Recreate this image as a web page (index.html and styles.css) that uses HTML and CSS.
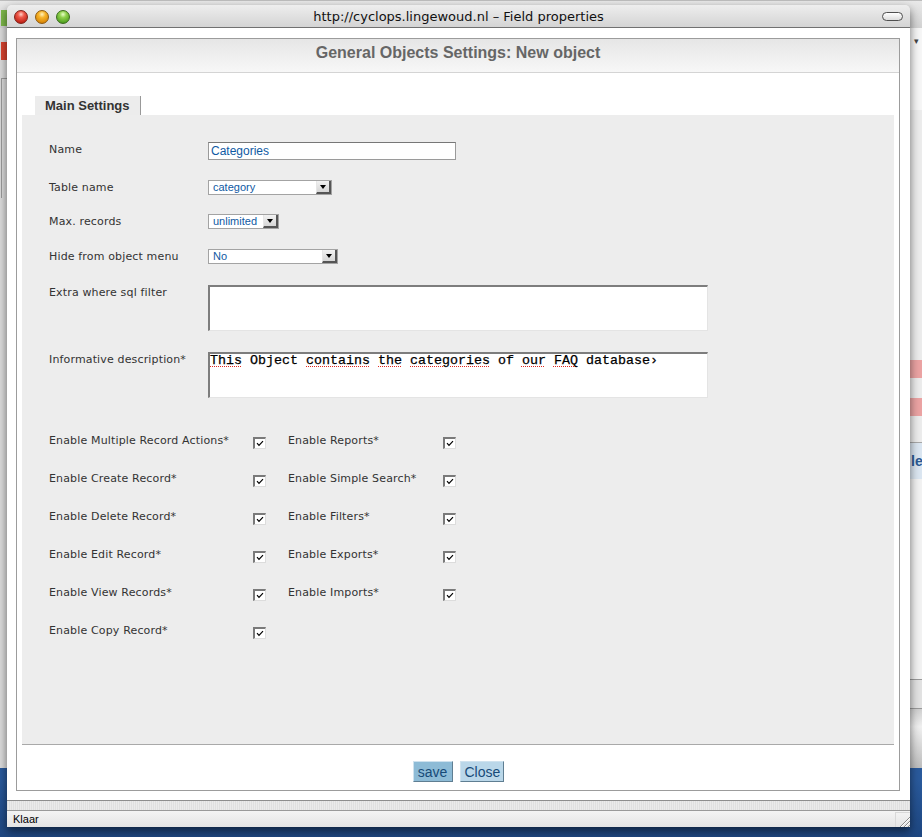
FILE: index.html
```html
<!DOCTYPE html>
<html>
<head>
<meta charset="utf-8">
<title>Field properties</title>
<link rel="stylesheet" href="styles.css">
</head>
<body>
<div class="desktop">
  <div class="backwin">
    <div class="bw-title"></div>
    <div class="bw-body">
      <div class="bw-left">
        <div class="bw-green"></div>
        <div class="bw-red"></div>
        <div class="bw-lines"></div>
      </div>
      <div class="bw-mid"></div>
      <div class="bw-right">
        <div class="bw-r1">&#9662;</div>
        <div class="bw-r2"></div>
        <div class="bw-pink"></div>
        <div class="bw-r3"></div>
        <div class="bw-pink"></div>
        <div class="bw-r4"></div>
        <div class="bw-blue">le</div>
        <div class="bw-r5"></div>
        <div class="bw-r6"></div>
        <div class="bw-r7"></div>
      </div>
    </div>
  </div>

  <div class="win">
    <div class="titlebar">
      <div class="lights">
        <span class="light red"></span>
        <span class="light yellow"></span>
        <span class="light green"></span>
      </div>
      <div class="title">http://cyclops.lingewoud.nl – Field properties</div>
      <span class="pill"></span>
    </div>

    <div class="content">
      <div class="box">
        <div class="header">General Objects Settings: New object</div>
        <div class="tabs"><div class="tab">Main Settings</div></div>
        <div class="panel">
          <div class="frow r1">
            <div class="lbl">Name</div>
            <div class="textinput">Categories</div>
          </div>
          <div class="frow r2">
            <div class="lbl">Table name</div>
            <div class="select w-table"><span class="sel-text">category</span><span class="arrow"></span></div>
          </div>
          <div class="frow r3">
            <div class="lbl">Max. records</div>
            <div class="select w-max"><span class="sel-text">unlimited</span><span class="arrow"></span></div>
          </div>
          <div class="frow r4">
            <div class="lbl">Hide from object menu</div>
            <div class="select w-hide"><span class="sel-text">No</span><span class="arrow"></span></div>
          </div>
          <div class="frow r5">
            <div class="lbl">Extra where sql filter</div>
            <div class="textarea"></div>
          </div>
          <div class="frow r6">
            <div class="lbl">Informative description*</div>
            <div class="textarea"><span class="sp">This</span> Object <span class="sp">contains</span> <span class="sp">the</span> <span class="sp">categories</span> of <span class="sp">our</span> <span class="sp">FAQ</span> database›</div>
          </div>

          <div class="cbgrid">
            <div class="cblbl">Enable Multiple Record Actions*</div>
            <div class="cb"><svg viewBox="0 0 10 9" width="10" height="9"><path d="M2 4.2 L4 6.4 L8 2.2" fill="none" stroke="#000" stroke-width="1.2"/></svg></div>
            <div class="cblbl">Enable Reports*</div>
            <div class="cb"><svg viewBox="0 0 10 9" width="10" height="9"><path d="M2 4.2 L4 6.4 L8 2.2" fill="none" stroke="#000" stroke-width="1.2"/></svg></div>

            <div class="cblbl">Enable Create Record*</div>
            <div class="cb"><svg viewBox="0 0 10 9" width="10" height="9"><path d="M2 4.2 L4 6.4 L8 2.2" fill="none" stroke="#000" stroke-width="1.2"/></svg></div>
            <div class="cblbl">Enable Simple Search*</div>
            <div class="cb"><svg viewBox="0 0 10 9" width="10" height="9"><path d="M2 4.2 L4 6.4 L8 2.2" fill="none" stroke="#000" stroke-width="1.2"/></svg></div>

            <div class="cblbl">Enable Delete Record*</div>
            <div class="cb"><svg viewBox="0 0 10 9" width="10" height="9"><path d="M2 4.2 L4 6.4 L8 2.2" fill="none" stroke="#000" stroke-width="1.2"/></svg></div>
            <div class="cblbl">Enable Filters*</div>
            <div class="cb"><svg viewBox="0 0 10 9" width="10" height="9"><path d="M2 4.2 L4 6.4 L8 2.2" fill="none" stroke="#000" stroke-width="1.2"/></svg></div>

            <div class="cblbl">Enable Edit Record*</div>
            <div class="cb"><svg viewBox="0 0 10 9" width="10" height="9"><path d="M2 4.2 L4 6.4 L8 2.2" fill="none" stroke="#000" stroke-width="1.2"/></svg></div>
            <div class="cblbl">Enable Exports*</div>
            <div class="cb"><svg viewBox="0 0 10 9" width="10" height="9"><path d="M2 4.2 L4 6.4 L8 2.2" fill="none" stroke="#000" stroke-width="1.2"/></svg></div>

            <div class="cblbl">Enable View Records*</div>
            <div class="cb"><svg viewBox="0 0 10 9" width="10" height="9"><path d="M2 4.2 L4 6.4 L8 2.2" fill="none" stroke="#000" stroke-width="1.2"/></svg></div>
            <div class="cblbl">Enable Imports*</div>
            <div class="cb"><svg viewBox="0 0 10 9" width="10" height="9"><path d="M2 4.2 L4 6.4 L8 2.2" fill="none" stroke="#000" stroke-width="1.2"/></svg></div>

            <div class="cblbl">Enable Copy Record*</div>
            <div class="cb"><svg viewBox="0 0 10 9" width="10" height="9"><path d="M2 4.2 L4 6.4 L8 2.2" fill="none" stroke="#000" stroke-width="1.2"/></svg></div>
          </div>
        </div>
        <div class="footer">
          <button class="btn btn-save">save</button>
          <button class="btn btn-close">Close</button>
        </div>
      </div>
    </div>

    <div class="stripes"></div>
    <div class="status">
      <span class="klaar">Klaar</span>
      <span class="grip"><svg viewBox="0 0 15 15" width="15" height="15"><path d="M14 4 L4 14 M14 8 L8 14 M14 12 L12 14" stroke="#8a8a8a" stroke-width="1"/><path d="M14 5 L5 14 M14 9 L9 14" stroke="#fff" stroke-width="1"/></svg></span>
    </div>
  </div>
</div>
</body>
</html>
```

FILE: styles.css
```css
* { box-sizing: border-box; }
html, body { margin: 0; padding: 0; }
body {
  width: 922px;
  height: 837px;
  overflow: hidden;
  background: linear-gradient(#2e62a8 0, #2a5a9c 780px, #1d4680 837px);
  font-family: "Liberation Sans", Arial, sans-serif;
}
.desktop { position: relative; width: 922px; height: 837px; }

/* window behind */
.backwin {
  position: absolute;
  left: -30px;
  top: 0;
  width: 990px;
  height: 768px;
  background: #ececec;
  display: flex;
  flex-direction: column;
}
.bw-title {
  height: 28px;
  background: linear-gradient(#e9e9e9, #d2d2d2);
  border-top: 1px solid #bdbdbd;
}
.bw-body { flex: 1; display: flex; }
.bw-left { width: 37px; display: flex; flex-direction: column; align-items: flex-end; background: #dcdcdc; }
.bw-green { width: 6px; height: 16px; margin-top: -18px; background: #7db84a; }
.bw-red { width: 6px; height: 18px; margin-top: 16px; background: #d8442f; }
.bw-lines { width: 6px; height: 120px; margin-top: 18px; border-left: 1px solid #9a9a9a; border-top: 1px solid #9a9a9a; }
.bw-mid { flex: 1; }
.bw-right { width: 80px; display: flex; flex-direction: column; background: #ececec; }
.bw-r1 { height: 82px; background: #f6f6f6; font-size: 9px; color: #444; padding: 8px 0 0 34px; }
.bw-r2 { height: 250px; background: #ececec; }
.bw-pink { height: 18px; background: #eba3a3; }
.bw-r3 { height: 20px; background: #ececec; }
.bw-r4 { height: 27px; background: #ececec; border-bottom: 1px solid #a8a8a8; }
.bw-blue { height: 36px; background: #dbe6f1; color: #2a5a94; font: bold 14px/36px "Liberation Sans", sans-serif; padding-left: 31px; }
.bw-r5 { height: 201px; background: #f2f2f2; border-bottom: 1px solid #9a9a9a; }
.bw-r6 { height: 29px; background: #e2e2e2; border-bottom: 1px solid #9a9a9a; }
.bw-r7 { flex: 1; background: linear-gradient(#cfcfcf, #f0f0f0 30%, #bdbdbd); }

/* front window */
.win {
  position: absolute;
  left: 7px;
  top: 5px;
  width: 903px;
  height: 822px;
  display: flex;
  flex-direction: column;
  box-shadow: 0 4px 10px rgba(0, 0, 0, 0.55);
  border-radius: 5px 5px 0 0;
}
.titlebar {
  height: 23px;
  border-bottom: 1px solid #717171;
  background: linear-gradient(#eeeeee, #d4d4d4);
  border-radius: 5px 5px 0 0;
  display: grid;
  grid-template-columns: 1fr auto 1fr;
  align-items: center;
  padding: 0 7px;
}
.lights { display: flex; gap: 7px; margin-top: 2px; }
.light { width: 14px; height: 14px; border-radius: 50%; display: block; }
.red {
  background: radial-gradient(circle at 50% 28%, #ffd0c8 0, #ee5a4c 30%, #c4261a 75%, #8e140c 100%);
  border: 1px solid #7e2018;
}
.yellow {
  background: radial-gradient(circle at 50% 28%, #fff2c0 0, #f7b52c 32%, #dc8a0a 75%, #a36206 100%);
  border: 1px solid #8c5a10;
}
.green {
  background: radial-gradient(circle at 50% 28%, #e8ffc8 0, #8fd04c 32%, #56a524 75%, #2f7410 100%);
  border: 1px solid #3a6a1c;
}
.title {
  font: 13px/16px "DejaVu Sans", "Liberation Sans", sans-serif;
  color: #111;
  margin-top: 1px;
}
.pill {
  justify-self: end;
  width: 21px;
  height: 9px;
  margin-top: 1px;
  border: 1px solid #4f4f4f;
  border-radius: 5px;
  background: linear-gradient(#ffffff, #dcdcdc);
}

.content {
  height: 772px;
  background: #fff;
  padding: 10px 10px 9px 9px;
}
.box {
  height: 753px;
  border: 1px solid #9c9c9c;
  display: flex;
  flex-direction: column;
}
.header {
  height: 34px;
  border-bottom: 1px solid #d4d4d4;
  background: linear-gradient(#e6e6e6, #f7f7f7);
  text-align: center;
  font: bold 16px/18px "Liberation Sans", Arial, sans-serif;
  color: #666;
  padding-top: 5px;
}
.tabs { margin-top: 23px; height: 19px; padding-left: 18px; display: flex; }
.tab {
  background: #ececec;
  border-right: 1px solid #999;
  padding: 0 10px;
  font: bold 13px/19px "Liberation Sans", Arial, sans-serif;
  color: #333;
}
.panel {
  height: 630px;
  margin: 0 5px;
  background: #ededed;
  border-bottom: 1px solid #a9a9a9;
  padding: 27px 0 0 27px;
  font: 11px/14px "DejaVu Sans", Verdana, sans-serif;
  letter-spacing: 0.15px;
  color: #333;
}
.frow { display: flex; align-items: flex-start; }
.lbl { width: 159px; flex: none; padding-top: 1px; }
.cblbl { padding-top: 1px; }
.r1 { height: 38px; }
.r2 { height: 34px; }
.r3 { height: 35px; }
.r4 { height: 36px; }
.r5 { height: 67px; }
.r6 { height: 81px; }

.textinput {
  width: 248px;
  height: 18px;
  border: 1px solid #9a9a9a;
  border-top-color: #777;
  background: #fff;
  padding: 1px 2px 0;
  font: 12px/14px "Liberation Sans", Arial, sans-serif;
  letter-spacing: 0;
  color: #0f5aa3;
}
.select {
  height: 15px;
  border: 1px solid #a3a3a3;
  background: #fff;
  display: flex;
  align-items: stretch;
}
.w-table { width: 124px; }
.w-max { width: 71px; }
.w-hide { width: 130px; }
.sel-text {
  flex: 1;
  padding-left: 4px;
  font: 11px/13px "Liberation Sans", Arial, sans-serif;
  letter-spacing: 0;
  color: #0f5aa3;
  white-space: nowrap;
  overflow: hidden;
}
.arrow {
  width: 15px;
  flex: none;
  background: linear-gradient(#f2f2f2, #d6d6d6);
  border-left: 1px solid #e6e6e6;
  border-right: 2px solid #555;
  border-bottom: 2px solid #555;
  display: flex;
  align-items: center;
  justify-content: center;
}
.arrow::after {
  content: "";
  width: 0;
  height: 0;
  border-left: 3.5px solid transparent;
  border-right: 3.5px solid transparent;
  border-top: 4px solid #000;
}
.textarea {
  width: 500px;
  height: 46px;
  background: #fff;
  border-top: 2px solid #7d7d7d;
  border-left: 2px solid #7d7d7d;
  border-right: 1px solid #e4e4e4;
  border-bottom: 1px solid #e4e4e4;
  font: 13.33px/14px "Liberation Mono", "Courier New", monospace;
  letter-spacing: 0;
  color: #000;
  -webkit-text-stroke: 0.25px #000;
  white-space: nowrap;
}
.sp {
  text-decoration: underline dotted #e0281e;
  text-decoration-thickness: 1px;
  text-underline-offset: 2px;
}

.cbgrid {
  display: grid;
  grid-template-columns: 204px 35px 155px 13px;
  grid-auto-rows: 38px;
}
.cb {
  width: 13px;
  height: 12px;
  margin-top: 4px;
  background: #fff;
  border-top: 2px solid #7a7a7a;
  border-left: 2px solid #7a7a7a;
  border-right: 1px solid #dcdcdc;
  border-bottom: 1px solid #dcdcdc;
  display: flex;
  align-items: flex-start;
  justify-content: flex-start;
}
.cb svg { display: block; }

.footer {
  flex: 1;
  display: flex;
  justify-content: center;
  align-items: flex-start;
  gap: 7px;
  padding-top: 16px;
}
.btn {
  height: 21px;
  margin: 0;
  padding: 1px 4px 0;
  font: 14px/18px "Liberation Sans", Arial, sans-serif;
  color: #174a78;
  border: 1px solid;
  border-color: #cfe2ee #5f7e92 #5f7e92 #cfe2ee;
  cursor: pointer;
}
.btn-save { width: 40px; background: #8dbbd6; }
.btn-close { width: 44px; background: #bad7e9; }

.stripes {
  height: 11px;
  border-top: 1px solid #8e8e8e;
  border-bottom: 1px solid #9a9a9a;
  background:
    repeating-linear-gradient(90deg, #e0e0e0 0 1px, #ebebeb 1px 2px),
    #e6e6e6;
}
.status {
  height: 16px;
  background: linear-gradient(#f4f4f4, #e4e4e4);
  display: flex;
  justify-content: space-between;
  align-items: flex-end;
  padding-left: 6px;
}
.klaar {
  font: 11px/16px "Liberation Sans", Arial, sans-serif;
  color: #000;
  align-self: stretch;
}
.grip {
  width: 15px;
  height: 15px;
  border-left: 1px solid #d8d8d8;
  border-top: 1px solid #d8d8d8;
  display: block;
}
.grip svg { display: block; }
```
